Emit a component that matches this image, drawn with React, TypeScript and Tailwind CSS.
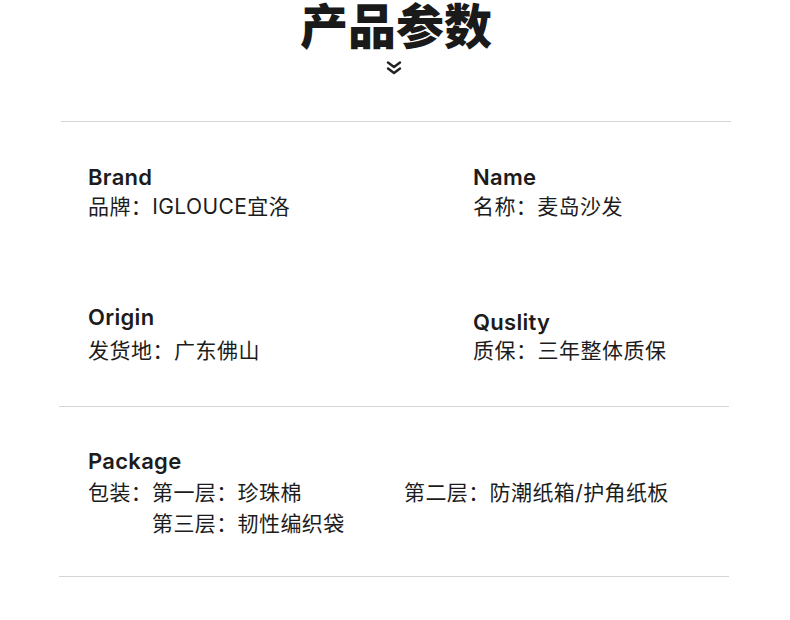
import React from 'react';

const FONT = "font-['Inter','Noto_Sans_CJK_SC',sans-serif]";

const Label = ({ en, cn, className = '' }: { en: string; cn: string; className?: string }) => (
  <div className={className}>
    <div className="text-[22px] leading-[29px] font-semibold tracking-[0.3px] text-[#1c1c1c]">{en}</div>
    <div className="text-[21px] leading-[29px] tracking-[0.4px] text-[#1c1c1c]">{cn}</div>
  </div>
);

const DoubleChevron = () => (
  <svg width="16" height="14" viewBox="0 0 16 14" fill="none" stroke="#222" strokeWidth="2.4" strokeLinecap="round" strokeLinejoin="round">
    <path d="M2 1.5 8 6l6-4.5" />
    <path d="M2 7.5 8 12l6-4.5" />
  </svg>
);

export default function App() {
  return (
    <div className={`w-[790px] h-[620px] bg-white overflow-hidden ${FONT}`}>
      {/* Title */}
      <div className="flex flex-col items-center">
        <h1 className="text-[48px] leading-[54px] font-black text-[#1a1a1a] ml-[2px]">产品参数</h1>
        <div className="mt-[7px] ml-[-2px]">
          <DoubleChevron />
        </div>
      </div>

      <div className="ml-[61px] w-[670px] h-px bg-[#d4d4d4] mt-[46px]" />

      {/* Brand / Name */}
      <div className="flex pt-[41px]">
        <Label en="Brand" cn="品牌：IGLOUCE宜洛" className="ml-[88px] w-[385px]" />
        <Label en="Name" cn="名称：麦岛沙发" />
      </div>

      {/* Origin / Quality */}
      <div className="flex pt-[82px]">
        <div className="ml-[88px] w-[385px]">
          <div className="text-[22px] leading-[29px] font-semibold tracking-[0.3px] text-[#1c1c1c]">Origin</div>
          <div className="text-[21px] leading-[29px] tracking-[0.5px] text-[#1c1c1c] mt-[4px]">发货地：广东佛山</div>
        </div>
        <div className="mt-[5px]">
          <div className="text-[22px] leading-[29px] font-semibold tracking-[0.3px] text-[#1c1c1c]">Quslity</div>
          <div className="text-[21px] leading-[29px] tracking-[0.5px] text-[#1c1c1c] -mt-px">质保：三年整体质保</div>
        </div>
      </div>

      <div className="ml-[59px] w-[670px] h-px bg-[#d4d4d4] mt-[41px]" />

      {/* Package */}
      <div className="pt-[40px] ml-[88px] text-[#1c1c1c]">
        <div className="text-[22px] leading-[29px] font-semibold tracking-[0.3px]">Package</div>
        <div className="flex text-[21px] leading-[31px] tracking-[0.4px] mt-px whitespace-nowrap">
          <div className="w-[64px] shrink-0">包装：</div>
          <div className="w-[252px] shrink-0">
            <div>第一层：珍珠棉</div>
            <div>第三层：韧性编织袋</div>
          </div>
          <div>第二层：防潮纸箱/护角纸板</div>
        </div>
      </div>

      <div className="ml-[59px] w-[670px] h-px bg-[#d4d4d4] mt-[37px]" />
    </div>
  );
}
